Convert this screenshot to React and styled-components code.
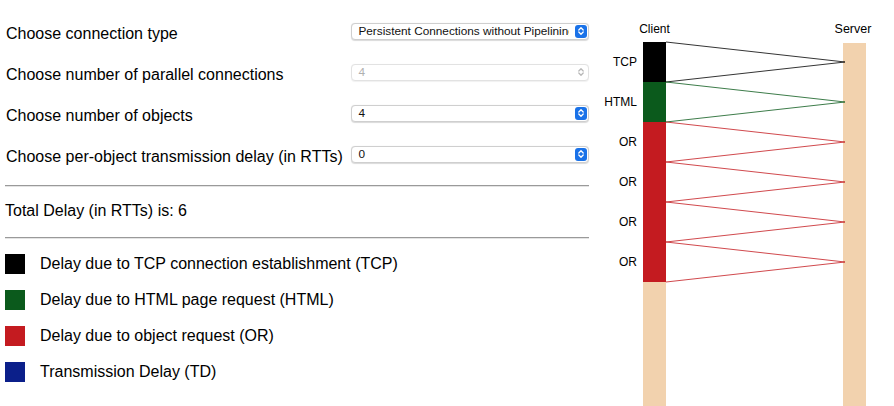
import React from 'react'
import styled, { createGlobalStyle } from 'styled-components'

const GlobalStyle = createGlobalStyle`
  html, body {
    margin: 0;
    padding: 0;
    background: #ffffff;
  }
  body {
    font-family: "Liberation Sans", Arial, Helvetica, sans-serif;
    color: #000;
  }
`;

const Page = styled.div`
  display: flex;
  width: 894px;
  height: 406px;
  overflow: hidden;
  padding-left: 5px;
  box-sizing: border-box;
`;

const LeftPanel = styled.div`
  width: 584px;
  flex-shrink: 0;
  padding-top: 13px;
`;

const Row = styled.div`
  display: flex;
  align-items: center;
  height: 41px;
`;

const Label = styled.div`
  width: 346px;
  font-size: 16px;
  padding-left: 1px;
`;

const SelectBox = styled.div`
  position: relative;
  width: 238px;
  height: 17px;
  box-sizing: border-box;
  margin-bottom: 5px;
  border: 1px solid ${p => (p.disabled ? '#e2e2e2' : '#cfcfcf')};
  border-radius: 4px;
  background: #fff;
  box-shadow: 0 0.5px 1px rgba(0, 0, 0, ${p => (p.disabled ? 0.06 : 0.15)});
  display: flex;
  align-items: center;
  padding-left: 6px;
  font-size: 11.8px;
  color: ${p => (p.disabled ? '#b0b0b0' : '#111')};
`;

const SelectText = styled.span`
  width: 211px;
  overflow: hidden;
  white-space: nowrap;
`;

const Stepper = styled.span`
  position: absolute;
  right: 1px;
  top: 1px;
  width: 12px;
  height: 13px;
  border-radius: 3px;
  background: ${p => (p.disabled ? 'transparent' : '#1a72e8')};
  display: flex;
  align-items: center;
  justify-content: center;
`;

const Rule = styled.hr`
  margin: 0;
  border: none;
  border-top: 1px solid #9a9a9a;
  border-bottom: 1px solid #e4e4e4;
  height: 0;
`;

const FirstRule = styled(Rule)`
  margin-top: 8px;
`;

const Total = styled.div`
  font-size: 16px;
  line-height: 20px;
  margin: 14px 0 16px 0;
`;

const Legend = styled.div`
  padding-top: 7px;
`;

const LegendRow = styled.div`
  display: flex;
  align-items: center;
  height: 36px;
`;

const Swatch = styled.span`
  width: 20px;
  height: 20px;
  background: ${p => p.color};
  margin-right: 15px;
  flex-shrink: 0;
`;

const LegendText = styled.span`
  font-size: 16px;
`;

const Diagram = styled.svg`
  display: block;
  margin-left: 1px;
  flex-shrink: 0;
`;

const COLORS = {
  tcp: '#000000',
  html: '#0b5a1c',
  or: '#c41b20',
  td: '#0b1f8a',
  idle: '#f2d2ae',
}

const controls = [
  { label: 'Choose connection type', value: 'Persistent Connections without Pipelining' },
  { label: 'Choose number of parallel connections', value: '4', disabled: true },
  { label: 'Choose number of objects', value: '4' },
  { label: 'Choose per-object transmission delay (in RTTs)', value: '0' },
]

const legend = [
  { color: COLORS.tcp, text: 'Delay due to TCP connection establishment (TCP)' },
  { color: COLORS.html, text: 'Delay due to HTML page request (HTML)' },
  { color: COLORS.or, text: 'Delay due to object request (OR)' },
  { color: COLORS.td, text: 'Transmission Delay (TD)' },
]

// one segment per RTT, drawn from the client bar to the server and back
const segments = [
  { label: 'TCP', color: COLORS.tcp },
  { label: 'HTML', color: COLORS.html },
  { label: 'OR', color: COLORS.or },
  { label: 'OR', color: COLORS.or },
  { label: 'OR', color: COLORS.or },
  { label: 'OR', color: COLORS.or },
]

const Chevrons = ({ disabled }) => (
  <svg width="8" height="10" viewBox="0 0 8 10">
    <path
      d="M1.8 4 L4 1.8 L6.2 4 M1.8 6 L4 8.2 L6.2 6"
      fill="none"
      stroke={disabled ? '#b8b8b8' : '#fff'}
      strokeWidth="1.3"
      strokeLinecap="round"
      strokeLinejoin="round"
    />
  </svg>
)

const Select = ({ value, disabled }) => (
  <SelectBox disabled={disabled}>
    <SelectText>{value}</SelectText>
    <Stepper disabled={disabled}>
      <Chevrons disabled={disabled} />
    </Stepper>
  </SelectBox>
)

const TimeDiagram = () => {
  const clientX = 643
  const serverX = 843
  const barW = 23
  const top = 42
  const rtt = 40
  const end = top + rtt * segments.length

  return (
    <Diagram width="304" height="406" viewBox="590 0 304 406" fontFamily="Liberation Sans, Arial, sans-serif">
      <text x="654.5" y="33" fontSize="12" textAnchor="middle">Client</text>
      <text x="853" y="33" fontSize="12.5" textAnchor="middle">Server</text>

      <rect x={serverX} y={top + 1} width={barW} height={406 - top} fill={COLORS.idle} />
      <rect x={clientX} y={end} width={barW} height={406 - end} fill={COLORS.idle} />

      {segments.map((s, i) => {
        const y0 = top + i * rtt
        const mid = y0 + rtt / 2
        return (
          <g key={i}>
            <rect x={clientX} y={y0} width={barW} height={rtt} fill={s.color} />
            <polyline
              points={`${clientX + barW},${y0} ${serverX + 2},${mid} ${clientX + barW},${y0 + rtt}`}
              fill="none"
              stroke={s.color}
              strokeWidth="0.8"
            />
            <text x="637" y={mid + 4} fontSize="12" textAnchor="end">{s.label}</text>
          </g>
        )
      })}
    </Diagram>
  )
}

const App = () => {
  return (
    <>
      <GlobalStyle />
      <Page>
        <LeftPanel>
          {controls.map(c => (
            <Row key={c.label}>
              <Label>{c.label}</Label>
              <Select value={c.value} disabled={c.disabled} />
            </Row>
          ))}

          <FirstRule />
          <Total>Total Delay (in RTTs) is: 6</Total>
          <Rule />

          <Legend>
            {legend.map(l => (
              <LegendRow key={l.text}>
                <Swatch color={l.color} />
                <LegendText>{l.text}</LegendText>
              </LegendRow>
            ))}
          </Legend>
        </LeftPanel>

        <TimeDiagram />
      </Page>
    </>
  )
}

export default App
